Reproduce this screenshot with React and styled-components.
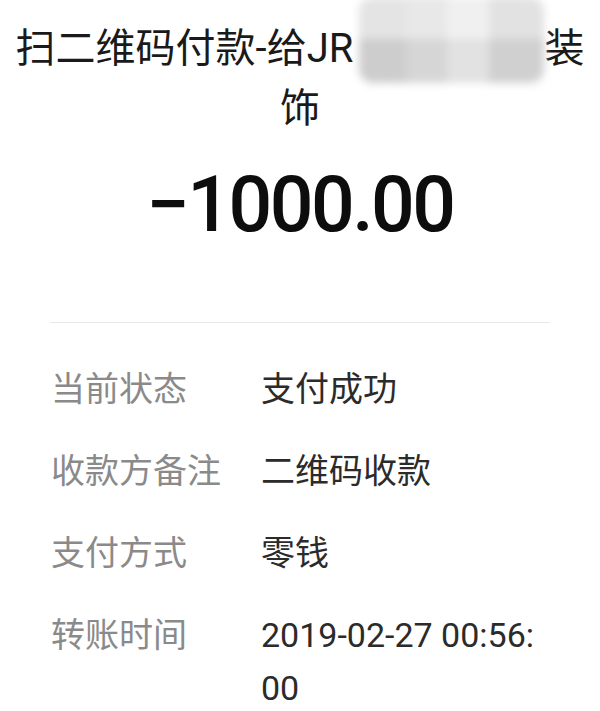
import React from "react";
import styled, { createGlobalStyle } from "styled-components";

const GlobalStyle = createGlobalStyle`
  body {
    margin: 0;
    background: #ffffff;
    font-family: Roboto, "Noto Sans CJK SC", sans-serif;
  }
`;

const Page = styled.div`
  width: 600px;
  min-height: 711px;
  background: #fff;
  overflow: hidden;
`;

const Title = styled.div`
  padding: 19px 11px 0;
  font-size: 40px;
  line-height: 60px;
  color: #1a1a1a;
  text-align: center;
`;

const Hidden = styled.span`
  position: relative;
  display: inline-block;
  width: 191px;
  height: 1em;
  vertical-align: baseline;
`;

const Mosaic = styled.span`
  position: absolute;
  left: 6px;
  right: 0;
  top: -25px;
  height: 86px;
  display: grid;
  grid-template-columns: 47px 41px 42px 1fr;
  grid-template-rows: 42px 44px;
  filter: blur(4px);
  border-radius: 14px;
  overflow: hidden;
`;

const Tile = styled.span`
  background: ${(props) => props.shade};
`;

const Amount = styled.div`
  margin-top: 28px;
  font-size: 77px;
  line-height: 1;
  font-weight: 500;
  letter-spacing: -2.5px;
  color: #0d0d0d;
  text-align: center;
`;

const Divider = styled.div`
  margin: 78px 50px 0;
  height: 1px;
  background: #e8e8e8;
`;

const List = styled.div`
  margin-top: 40px;
  padding: 0 50px 0 51px;
  display: flex;
  flex-direction: column;
  gap: 29px;
`;

const Row = styled.div`
  display: grid;
  grid-template-columns: 210px 1fr;
  font-size: 34px;
  line-height: 53px;
`;

const Label = styled.div`
  color: #8a8a8a;
`;

const Value = styled.div`
  color: #2b2b2b;
  word-break: break-all;
`;

const shades = [
  "#e4e4e4", "#e8e8e8", "#f0f0f0", "#e2e2e2",
  "#cdcdcd", "#d6d6d6", "#e2e2e2", "#d0d0d0",
];

const rows = [
  { label: "当前状态", value: "支付成功" },
  { label: "收款方备注", value: "二维码收款" },
  { label: "支付方式", value: "零钱" },
  { label: "转账时间", value: "2019-02-27 00:56:00" },
];

const App = () => {
  return (
    <Page>
      <GlobalStyle />
      <Title>
        扫二维码付款-给JR
        <Hidden>
          <Mosaic>
            {shades.map((shade, i) => (
              <Tile key={i} shade={shade} />
            ))}
          </Mosaic>
        </Hidden>
        装
        <br />
        饰
      </Title>
      <Amount>−1000.00</Amount>
      <Divider />
      <List>
        {rows.map((row) => (
          <Row key={row.label}>
            <Label>{row.label}</Label>
            <Value>{row.value}</Value>
          </Row>
        ))}
      </List>
    </Page>
  );
};

export default App;
